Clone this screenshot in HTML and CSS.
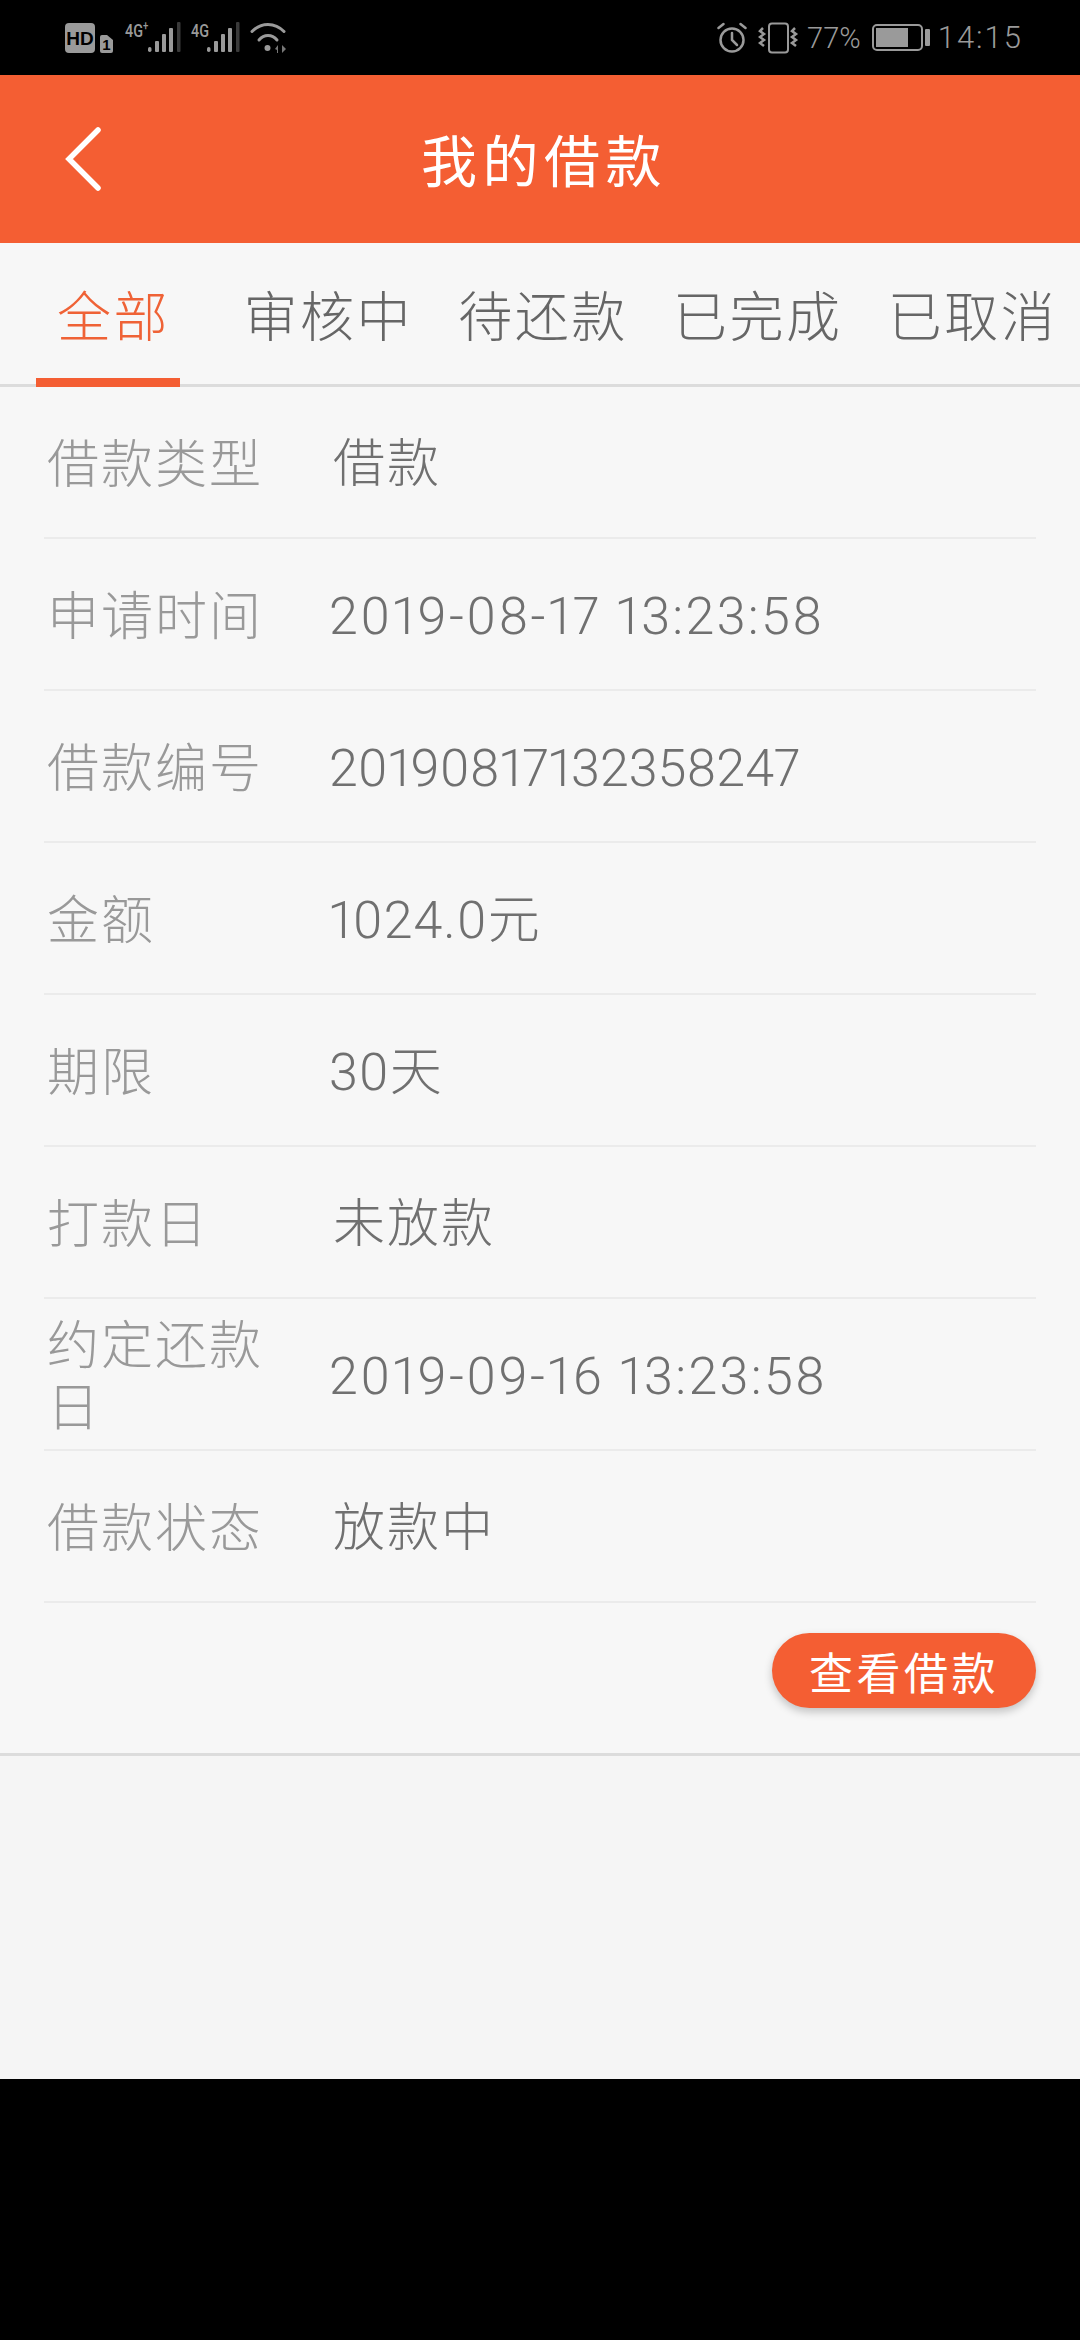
FILE: index.html
```html
<!DOCTYPE html>
<html lang="zh-CN">
  <head>
    <meta charset="UTF-8" />
    <title>我的借款</title>
    <link rel="stylesheet" href="styles.css">
  </head>
  <body>
    <div class="screen">
      <div class="status-bar">
        <div class="status-left">
          <svg width="50" height="32" viewBox="0 0 50 32">
            <rect x="0" y="1" width="30" height="30" rx="4" fill="#9a9a9a"/>
            <text x="15" y="22.500" class="hd-text">HD</text>
            <path d="M35 15a2 2 0 0 1 2-2h5l6 5v11a2 2 0 0 1-2 2h-9a2 2 0 0 1-2-2z" fill="#9a9a9a"/>
            <text x="41.500" y="28" class="sim-text">1</text>
          </svg>
          <div class="net">
            <span class="net-label net-label-plus">4G<sup>+</sup></span>
            <svg width="33" height="32" viewBox="0 0 33 32">
              <g fill="#9a9a9a">
                <rect x="0" y="25" width="3.500" height="5" rx="1.700"/>
                <rect x="7" y="19" width="4" height="11" rx="1"/>
                <rect x="14" y="12" width="4" height="18" rx="1"/>
                <rect x="21" y="6" width="4" height="24" rx="1"/>
                <rect x="29" y="0" width="3.500" height="30" rx="1" fill="#3a3a3a"/>
              </g>
            </svg>
          </div>
          <div class="net">
            <span class="net-label">4G</span>
            <svg width="33" height="32" viewBox="0 0 33 32">
              <g fill="#9a9a9a">
                <rect x="0" y="25" width="3.500" height="5" rx="1.700"/>
                <rect x="7" y="19" width="4" height="11" rx="1"/>
                <rect x="14" y="12" width="4" height="18" rx="1"/>
                <rect x="21" y="6" width="4" height="24" rx="1"/>
                <rect x="29" y="0" width="3.500" height="30" rx="1" fill="#3a3a3a"/>
              </g>
            </svg>
          </div>
          <svg width="38" height="32" viewBox="0 0 38 32">
            <g fill="none" stroke="#9a9a9a" stroke-width="3" stroke-linecap="round">
              <path d="M2 9.500C11 0 25 0 34 9.500"/>
              <path d="M9 18C14 12 22 12 27 18"/>
            </g>
            <circle cx="17.500" cy="26" r="3" fill="#9a9a9a"/>
            <path d="M25 27l3-4v8h-1v-3zM32 23l4 4-4 4z" fill="#777"/>
          </svg>
        </div>
        <div class="status-right">
          <svg class="alarm" width="30" height="32" viewBox="0 0 30 32">
            <g fill="none" stroke="#9a9a9a" stroke-width="2.500" stroke-linecap="round">
              <circle cx="15" cy="18" r="11.500"/>
              <path d="M15 11v7l5 5"/>
              <path d="M1.500 6l5-4M28.500 6l-5-4"/>
            </g>
          </svg>
          <svg class="vibrate" width="41" height="32" viewBox="0 0 41 32">
            <rect x="11" y="1.500" width="19" height="29" rx="3" fill="none" stroke="#9a9a9a" stroke-width="2"/>
            <g fill="none" stroke="#9a9a9a" stroke-width="2.500">
              <path d="M5 6l-3 3 4 3-4 3 4 3-4 3 4 3"/>
              <path d="M37 6l-3 3 4 3-4 3 4 3-4 3 4 3"/>
            </g>
          </svg>
          <span class="battery-pct">77%</span>
          <div class="battery">
            <div class="battery-body"><div class="battery-fill"></div></div>
            <div class="battery-tip"></div>
          </div>
          <span class="clock">14:15</span>
        </div>
      </div>

      <header class="title-bar">
        <svg class="back" width="44" height="70" viewBox="0 0 44 70">
          <path d="M36 6L7 35l29 29" fill="none" stroke="#fff" stroke-width="5.500" stroke-linecap="round"/>
        </svg>
        <h1>我的借款</h1>
      </header>

      <nav class="tabs">
        <a class="tab tab-active">全部</a>
        <a class="tab">审核中</a>
        <a class="tab">待还款</a>
        <a class="tab">已完成</a>
        <a class="tab">已取消</a>
      </nav>

      <section class="loan">
        <div class="row"><span class="label">借款类型</span><span class="value value-text">借款</span></div>
        <div class="row"><span class="label">申请时间</span><span class="value value-date">2019-08-17 13:23:58</span></div>
        <div class="row"><span class="label">借款编号</span><span class="value">20190817132358247</span></div>
        <div class="row"><span class="label">金额</span><span class="value value-amount">1024.0元</span></div>
        <div class="row"><span class="label">期限</span><span class="value value-amount">30天</span></div>
        <div class="row"><span class="label">打款日</span><span class="value value-text">未放款</span></div>
        <div class="row"><span class="label">约定还款日</span><span class="value value-date">2019-09-16 13:23:58</span></div>
        <div class="row"><span class="label">借款状态</span><span class="value value-text">放款中</span></div>
        <div class="actions">
          <button class="btn">查看借款</button>
        </div>
      </section>

      <div class="empty"></div>
      <div class="nav-space"></div>
    </div>
  </body>
</html>
```

FILE: styles.css
```css
* {
  box-sizing: border-box;
}
body {
  margin: 0;
  background-color: #000;
  font-family: "Noto Sans CJK SC", "Noto Sans", sans-serif;
  font-weight: 300;
}
.screen {
  width: 1080px;
  height: 2340px;
  display: flex;
  flex-direction: column;
  overflow: hidden;
}
.status-bar {
  height: 75px;
  background-color: #000;
  color: #9a9a9a;
  padding: 0 57px 0 65px;
  display: flex;
  justify-content: space-between;
  align-items: center;
}
.status-left,
.status-right {
  display: flex;
  align-items: center;
}
.status-left {
  gap: 10px;
}
.hd-text {
  font-family: "Liberation Sans", sans-serif;
  font-size: 19px;
  font-weight: 700;
  fill: #000;
  text-anchor: middle;
}
.sim-text {
  font-family: "Liberation Sans", sans-serif;
  font-size: 15px;
  font-weight: 700;
  fill: #000;
  text-anchor: middle;
}
.net {
  display: flex;
  align-items: flex-start;
}
.net-label {
  width: 16px;
  font-family: "Roboto", sans-serif;
  font-size: 18px;
  font-weight: 500;
  line-height: 18px;
  white-space: nowrap;
  transform: scaleX(0.8);
  transform-origin: left top;
}
.net-label-plus {
  width: 23px;
}
.net-label sup {
  font-size: 12px;
  line-height: 0;
}
.battery-pct,
.clock {
  font-family: "Roboto", sans-serif;
  font-weight: 300;
}
.vibrate {
  margin-left: 11px;
}
.battery-pct {
  font-size: 29px;
  margin-left: 8px;
}
.battery {
  display: flex;
  align-items: center;
  gap: 2px;
  margin-left: 11px;
}
.battery-body {
  width: 51px;
  height: 27px;
  border: 2px solid #9a9a9a;
  border-radius: 5px;
  padding: 2px;
}
.battery-fill {
  width: 75%;
  height: 100%;
  background-color: #9a9a9a;
}
.battery-tip {
  width: 5px;
  height: 17px;
  background-color: #9a9a9a;
  border-radius: 1px;
}
.clock {
  font-size: 31px;
  margin-left: 8px;
  letter-spacing: 2px;
}
.title-bar {
  height: 168px;
  background-color: #f45e33;
  display: flex;
  align-items: center;
  justify-content: center;
  position: relative;
}
.title-bar h1 {
  margin: -3px 0 0 8px;
  color: #fff;
  font-size: 56px;
  font-weight: 400;
  letter-spacing: 5.500px;
}
.back {
  position: absolute;
  left: 62px;
  top: 49px;
}
.tabs {
  height: 144px;
  background-color: #f7f7f7;
  border-bottom: 3px solid #dcdcdc;
  padding-left: 6px;
  display: grid;
  grid-template-columns: repeat(5, 1fr);
}
.tab {
  font-size: 54px;
  color: #666;
  line-height: 141px;
  letter-spacing: 2.500px;
  text-align: center;
  white-space: nowrap;
  position: relative;
}
.tab-active {
  color: #ef6236;
}
.tab-active::after {
  content: "";
  position: absolute;
  left: 30px;
  bottom: -3px;
  width: 144px;
  height: 9px;
  background-color: #f45e33;
}
.loan {
  background-color: #f7f7f7;
  padding: 0 44px;
  border-bottom: 3px solid #dcdcdc;
  height: 1369px;
}
.row {
  height: 152px;
  border-bottom: 2px solid #ebebeb;
  display: flex;
  align-items: center;
}
.label {
  width: 285px;
  padding: 0 44px 3px 3px;
  color: #999;
  font-size: 52px;
  line-height: 62px;
  letter-spacing: 2px;
}
.value {
  color: #707070;
  font-size: 52px;
  line-height: 62px;
  padding-top: 6px;
  font-family: "Roboto", "Noto Sans CJK SC", sans-serif;
  font-variant-numeric: proportional-nums;
}
.value-text {
  margin-left: 4px;
  letter-spacing: 2px;
}
.value-date {
  letter-spacing: 2.300px;
}
.value-amount {
  letter-spacing: 1px;
}
.actions {
  display: flex;
  justify-content: flex-end;
  padding-top: 30px;
}
.btn {
  width: 264px;
  height: 75px;
  border: none;
  border-radius: 38px;
  background-color: #f45e33;
  color: #fff;
  font-family: "Noto Sans CJK SC", sans-serif;
  font-weight: 400;
  font-size: 44px;
  letter-spacing: 3.500px;
  padding: 0;
  box-shadow: 0 4px 8px rgba(0, 0, 0, 0.22);
}
.empty {
  height: 323px;
  background-color: #f5f5f5;
}
.nav-space {
  flex: 1;
  background-color: #000;
}
```
